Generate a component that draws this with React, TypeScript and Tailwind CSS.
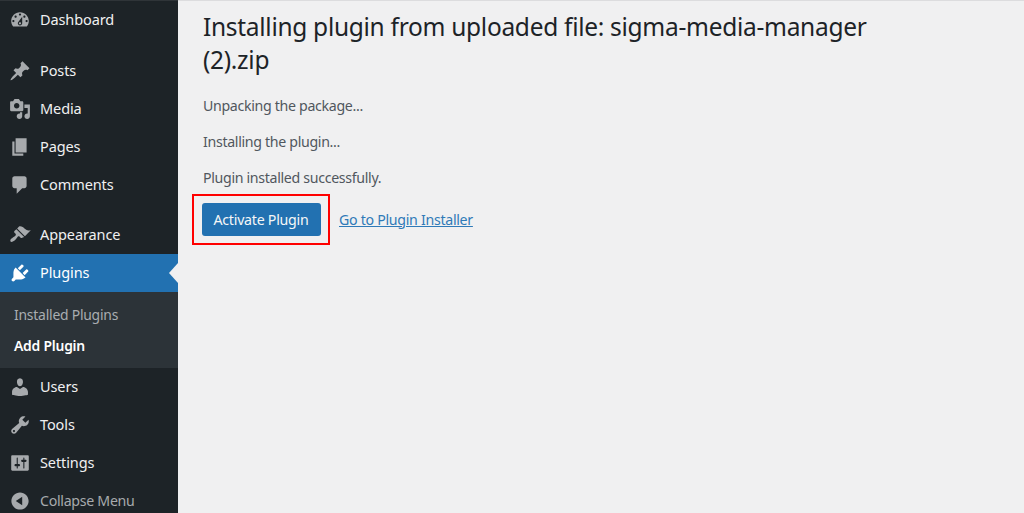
const P: Record<string, string> = {
  dashboard: "M3.76 16h12.48c1.1-1.37 1.76-3.11 1.76-5 0-4.42-3.58-8-8-8s-8 3.58-8 8c0 1.89.66 3.63 1.76 5zM10 4c.55 0 1 .45 1 1s-.45 1-1 1-1-.45-1-1 .45-1 1-1zM6 6c.55 0 1 .45 1 1s-.45 1-1 1-1-.45-1-1 .45-1 1-1zm8 0c.55 0 1 .45 1 1s-.45 1-1 1-1-.45-1-1 .45-1 1-1zm-5.37 5.55L12 7v6c0 1.1-.9 2-2 2s-2-.9-2-2c0-.57.24-1.08.63-1.45zM4 10c.55 0 1 .45 1 1s-.45 1-1 1-1-.45-1-1 .45-1 1-1zm12 0c.55 0 1 .45 1 1s-.45 1-1 1-1-.45-1-1 .45-1 1-1zm-5 3c0-.55-.45-1-1-1s-1 .45-1 1 .45 1 1 1 1-.45 1-1z",
  posts: "M10.44 3.02l1.82-1.82 6.36 6.35-1.83 1.82c-1.05-.68-2.48-.57-3.41.36l-.75.75c-.92.93-1.04 2.35-.35 3.41l-1.83 1.82-2.41-2.41-2.8 2.79c-.42.42-3.38 2.71-3.8 2.29s1.86-3.39 2.28-3.81l2.79-2.79L4.1 9.36l1.83-1.82c1.05.69 2.48.57 3.4-.36l.75-.75c.93-.92 1.05-2.35.36-3.41z",
  media: "M13 11V4c0-.55-.45-1-1-1h-1.67L9 1H5L3.67 3H2c-.55 0-1 .45-1 1v7c0 .55.45 1 1 1h10c.55 0 1-.45 1-1zM7 4.5c1.38 0 2.5 1.12 2.5 2.5S8.38 9.5 7 9.5 4.5 8.38 4.5 7 5.62 4.5 7 4.5zM14 6h5v10.5c0 1.38-1.12 2.5-2.5 2.5S14 17.88 14 16.5s1.12-2.5 2.5-2.5c.17 0 .34.02.5.05V9h-3V6zm-4 8.05V13h2v3.5c0 1.38-1.12 2.5-2.5 2.5S7 17.88 7 16.5 8.12 14 9.5 14c.17 0 .34.02.5.05z",
  pages: "M6 15V2h10v13H6zm-1 1h8v2H3V5h2v11z",
  comments: "M5 2h9c1.1 0 2 .9 2 2v7c0 1.1-.9 2-2 2h-2l-5 5v-5H5c-1.1 0-2-.9-2-2V4c0-1.1.9-2 2-2z",
  appearance: "M14.48 11.06L7.41 3.99l1.5-1.5c.5-.56 2.3-.47 3.51.32 1.21.8 1.43 1.28 2.91 2.1 1.18.64 2.45 1.26 4.45.85zm-.71.71L6.7 4.7 4.93 6.47c-.39.39-.39 1.02 0 1.41l1.06 1.06c.39.39.39 1.03 0 1.42-.6.6-1.43 1.11-2.21 1.69-.35.26-.7.53-1.01.84C1.43 13.23.78 15.33 1.44 16s2.77 0 4.12-1.35c.31-.31.58-.66.84-1.01.58-.78 1.09-1.61 1.69-2.21.39-.39 1.03-.39 1.42 0l1.06 1.06c.39.39 1.02.39 1.41 0z",
  plugins: "M13.11 4.36L9.87 7.6 8 5.73l3.24-3.24c.35-.34 1.05-.2 1.56.32.52.51.66 1.21.31 1.55zm-8 1.77l.91-1.12 9.01 9.01-1.19.84c-.71.71-2.63 1.16-3.82 1.16H6.14L4.9 17.26c-.59.59-1.54.59-2.12 0-.59-.58-.59-1.53 0-2.12l1.24-1.24v-3.88c0-1.13.4-3.19 1.09-3.89zm7.26 3.97l3.24-3.24c.34-.35 1.04-.21 1.55.31.52.51.66 1.21.31 1.55l-3.24 3.25z",
  users: "M10 9.25c-2.27 0-2.73-3.44-2.73-3.44C7 4.02 7.82 2 9.97 2c2.16 0 2.98 2.02 2.71 3.81 0 0-.41 3.44-2.68 3.44zm0 2.57L12.72 10c2.39 0 4.52 2.33 4.52 4.53v2.49s-3.65 1.13-7.24 1.13c-3.65 0-7.24-1.13-7.24-1.13v-2.49c0-2.25 1.94-4.48 4.47-4.48z",
  tools: "M16.68 9.77c-1.34 1.34-3.3 1.67-4.95.99l-5.41 6.52c-.99.99-2.59.99-3.58 0s-.99-2.59 0-3.57l6.52-5.42c-.68-1.65-.35-3.61.99-4.95 1.28-1.28 3.12-1.62 4.72-1.06l-2.89 2.89 2.82 2.82 2.86-2.87c.53 1.58.18 3.39-1.08 4.65zM3.81 16.21c.4.39 1.04.39 1.43 0 .4-.4.4-1.04 0-1.43-.39-.4-1.03-.4-1.43 0-.39.39-.39 1.03 0 1.43z",
  settings: "M18 16V4c0-.55-.45-1-1-1H3c-.55 0-1 .45-1 1v12c0 .55.45 1 1 1h14c.55 0 1-.45 1-1zM8 11h1c.55 0 1 .45 1 1s-.45 1-1 1H8v1.5c0 .28-.22.5-.5.5s-.5-.22-.5-.5V13H6c-.55 0-1-.45-1-1s.45-1 1-1h1V5.5c0-.28.22-.5.5-.5s.5.22.5.5V11zm5-2h-1c-.55 0-1-.45-1-1s.45-1 1-1h1V5.5c0-.28.22-.5.5-.5s.5.22.5.5V7h1c.55 0 1 .45 1 1s-.45 1-1 1h-1v5.5c0 .28-.22.5-.5.5s-.5-.22-.5-.5V9z",
  collapse: "M10 2.16c4.33 0 7.84 3.51 7.84 7.84s-3.51 7.84-7.84 7.84S2.16 14.33 2.16 10 5.71 2.16 10 2.16zm2 11.72V6.12L6.18 9.97z",
};

function Item({ icon, label, active, muted }: { icon: string; label: string; active?: boolean; muted?: boolean }) {
  return (
    <div className={`relative flex h-[38px] items-center pl-[9px] ${active ? "bg-[#2271b1] text-white" : muted ? "text-[#a7aaad]" : "text-[#f0f0f1]"}`}>
      <svg viewBox="0 0 20 20" className={`h-[22px] w-[22px] shrink-0 ${active ? "fill-white" : "fill-[#a7aaad]"}`}>
        <path d={P[icon]} />
      </svg>
      <span className={`ml-[9px] ${muted ? "text-[14.2px] tracking-[-0.3px]" : "text-[14.5px] tracking-[-0.1px]"}`}>{label}</span>
      {active && (
        <span className="absolute right-0 top-1/2 h-0 w-0 -translate-y-1/2 border-y-[10px] border-r-[9px] border-y-transparent border-r-[#f0f0f1]" />
      )}
    </div>
  );
}

export default function App() {
  return (
    <div className="flex h-[513px] w-[1024px] overflow-hidden bg-[#f0f0f1] font-['Noto_Sans','Open_Sans',sans-serif]">
      <aside className="w-[178px] shrink-0 border-t border-[#2f3438] bg-[#1d2327]">
        <Item icon="dashboard" label="Dashboard" />
        <div className="h-[13px]" />
        <Item icon="posts" label="Posts" />
        <Item icon="media" label="Media" />
        <Item icon="pages" label="Pages" />
        <Item icon="comments" label="Comments" />
        <div className="h-3" />
        <Item icon="appearance" label="Appearance" />
        <Item icon="plugins" label="Plugins" active />
        <div className="flex h-[76px] flex-col bg-[#2c3338] pl-[14px] pt-2 text-[13.9px] tracking-[-0.22px]">
          <div className="flex h-[31px] items-center text-[#a9adb1]">Installed Plugins</div>
          <div className="flex h-[31px] items-center font-semibold text-white">Add Plugin</div>
        </div>
        <Item icon="users" label="Users" />
        <Item icon="tools" label="Tools" />
        <Item icon="settings" label="Settings" />
        <Item icon="collapse" label="Collapse Menu" muted />
      </aside>
      <main className="flex-1 border-t border-[#dcdcde] pl-[25px] pt-[9px]">
        <h1 className="w-[680px] text-[24.5px] leading-[33px] tracking-[-0.29px] text-[#1d2327]">
          Installing plugin from uploaded file: sigma-media-manager (2).zip
        </h1>
        <div className="mt-[21px] flex flex-col gap-[18px] text-[14.2px] leading-[18px] tracking-[-0.33px] text-[#50575e]">
          <p>Unpacking the package...</p>
          <p>Installing the plugin...</p>
          <p>Plugin installed successfully.</p>
        </div>
        <div className="-ml-[11px] mt-[7px] flex items-center">
          <div className="flex h-[51px] w-[138px] items-center justify-center border-2 border-[#f00]">
            <button className="flex h-[33px] w-[119px] items-center justify-center rounded-[3px] bg-[#2271b1] text-[14.2px] tracking-[-0.25px] text-[#f6f7f7]">
              Activate Plugin
            </button>
          </div>
          <a className="ml-[9px] text-[14.2px] tracking-[-0.3px] text-[#2f7ab8] underline">Go to Plugin Installer</a>
        </div>
      </main>
    </div>
  );
}
